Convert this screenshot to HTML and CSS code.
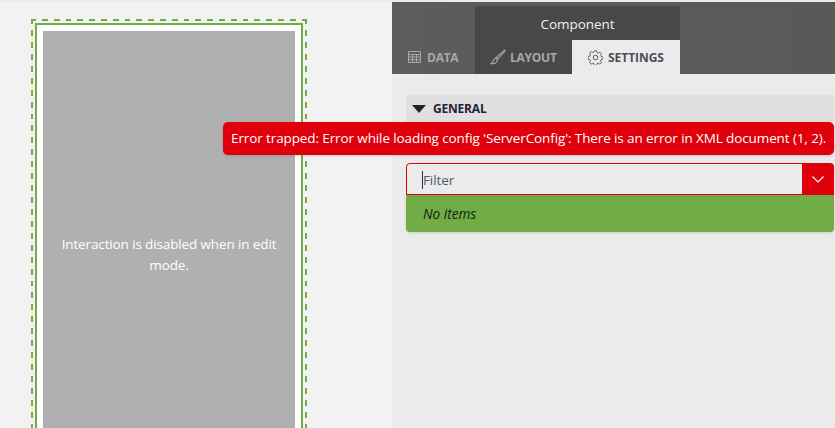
FILE: index.html
```html
<!DOCTYPE html>
<html lang="en">
<head>
<meta charset="utf-8">
<title>Component settings</title>
<link rel="stylesheet" href="styles.css">
</head>
<body>
<div class="page">
  <main class="canvas">
    <div class="dashed">
      <div class="solid">
        <div class="disabled"><p>Interaction is disabled when in edit mode.</p></div>
      </div>
    </div>
  </main>
  <aside class="panel">
    <header class="head">
      <div class="tab tab-data">
        <svg class="ico" viewBox="0 0 13 12" width="13" height="12"><path fill="none" stroke="currentColor" d="M.5.5h12v11H.5zM.5 3.500h12M.5 6h12M.5 8.700h12M4.500 3.500v8M8.500 3.500v8"/></svg>
        <span>DATA</span>
      </div>
      <div class="group">
        <div class="group-title">Component</div>
        <div class="group-tabs">
          <div class="tab tab-layout">
            <svg class="ico" viewBox="0 0 16 16" width="16" height="16"><path fill="none" stroke="currentColor" stroke-width="1.100" d="M14.500 1.200 6 8.600 7.600 10.200 15 2zM5.600 9.200C3.600 9.600 3.800 11.600 2.800 13 2.400 13.700 1.700 14.300 1 14.600c2.600.4 5-.4 6-2.200.5-.9.4-1.700.2-2.200z"/></svg>
            <span>LAYOUT</span>
          </div>
          <div class="tab tab-settings">
            <svg class="ico" viewBox="0 0 16 16" width="15" height="15"><g fill="none" stroke="currentColor"><circle cx="8" cy="8" r="2.400"/><path d="M6.800.8h2.400l.4 2 1.300.6 1.800-1.100 1.700 1.700-1.100 1.800.6 1.300 2 .4v2.400l-2 .4-.6 1.300 1.100 1.800-1.700 1.700-1.800-1.100-1.300.6-.4 2H6.800l-.4-2-1.300-.6-1.800 1.100-1.700-1.700 1.100-1.800-.6-1.300-2-.4V6.800l2-.4.6-1.300-1.100-1.800 1.700-1.700 1.800 1.100 1.300-.6z" stroke-width=".9"/></g></svg>
            <span>SETTINGS</span>
          </div>
        </div>
      </div>
    </header>
    <section class="body">
      <div class="section-head">
        <svg class="caret" viewBox="0 0 14 8" width="14" height="8"><path d="M0 0h14L7 8z"/></svg>
        <span>GENERAL</span>
      </div>
      <div class="combo">
        <div class="filter">
          <span class="text-caret"></span><span class="placeholder">Filter</span>
        </div>
        <div class="toggle">
          <svg viewBox="0 0 12 7" width="12" height="7"><path fill="none" stroke="#fff" stroke-width="1.100" d="M.5.5 6 6 11.500.5"/></svg>
        </div>
      </div>
      <div class="list"><em>No items</em></div>
    </section>
  </aside>
</div>
<div class="toast">Error trapped: Error while loading config 'ServerConfig': There is an error in XML document (1, 2).</div>
</body>
</html>
```

FILE: styles.css
```css
* { box-sizing: border-box; }
html, body {
  margin: 0;
  height: 100%;
  overflow: hidden;
}
body {
  background: #f2f2f2;
  font-family: "Open Sans", "Noto Sans", sans-serif;
  position: relative;
}
.page {
  display: flex;
  height: 100%;
  border-top: 2px solid #ebebeb;
}
.canvas {
  width: 392px;
  flex: none;
  padding: 17px 0 0 31px;
}
.dashed {
  width: 276px;
  height: 600px;
  padding: 4px;
  background-image:
    repeating-linear-gradient(90deg, #70ad47 0 5px, transparent 5px 11px, #70ad47 11px 11.8px),
    repeating-linear-gradient(180deg, #70ad47 0 5px, transparent 5px 11px, #70ad47 11px 11.93px),
    repeating-linear-gradient(180deg, #70ad47 0 5px, transparent 5px 11px, #70ad47 11px 11.93px);
  background-repeat: no-repeat;
  background-size: 100% 2px, 2px 100%, 2px 100%;
  background-position: left top, left top, right top;
}
.solid {
  height: 100%;
  border: 2px solid #70ad47;
  background: #fff;
  padding: 6px;
}
.disabled {
  height: 100%;
  background: #b0b0b0;
  color: #fff;
  font-size: 13.5px;
  letter-spacing: -.13px;
  line-height: 21px;
  text-align: center;
  padding: 203px 12px 0;
}
.disabled p { margin: 0; }
.panel {
  flex: 1;
  background: #ebebeb;
  min-width: 0;
}
.head {
  height: 72px;
  background: linear-gradient(90deg, #5c5c5c, #595959);
  display: flex;
  align-items: flex-end;
}
.tab {
  display: flex;
  align-items: center;
  height: 34px;
  font-size: 12px;
  font-weight: 700;
  letter-spacing: -.25px;
  color: #a8a8a8;
}
.tab-data {
  width: 83px;
  padding-left: 16px;
  gap: 6px;
}
.group {
  width: 205px;
  height: 68px;
  background: #484848;
}
.group-title {
  height: 34px;
  color: #f0f0f0;
  font-size: 13.5px;
  letter-spacing: -.03px;
  text-align: center;
  line-height: 37px;
}
.group-tabs { display: flex; }
.tab-layout {
  width: 97px;
  padding-left: 15px;
  gap: 4px;
}
.tab-settings {
  width: 108px;
  padding-left: 16px;
  gap: 5px;
  background: #ebebeb;
  color: #4a4f57;
  letter-spacing: -.05px;
}
.body { padding: 21px 1px 0 14px; }
.section-head {
  height: 27px;
  background: #e0e0e0;
  display: flex;
  align-items: center;
  gap: 7px;
  padding-left: 6px;
  font-size: 12px;
  font-weight: 700;
  letter-spacing: -.2px;
  color: #1f2430;
}
.caret { fill: #1f2430; }
.combo {
  display: flex;
  height: 32px;
  margin-top: 41px;
  border-radius: 4px 4px 0 0;
  overflow: hidden;
}
.filter {
  flex: 1;
  display: flex;
  align-items: center;
  border: 1px solid #df000b;
  border-right: 0;
  border-radius: 4px 0 0 0;
  padding: 2px 0 0 15px;
  font-size: 13.5px;
  letter-spacing: -.1px;
  color: #4f5b6b;
}
.text-caret {
  width: 1px;
  height: 18px;
  background: #1f2b4a;
}
.toggle {
  width: 32px;
  background: #df000b;
  display: flex;
  align-items: center;
  justify-content: center;
}
.list {
  height: 37px;
  background: #70ad47;
  border-radius: 0 0 4px 4px;
  box-shadow: 0 1px 3px rgba(0,0,0,.12);
  padding-left: 17px;
  font-size: 13.6px;
  line-height: 37px;
  color: #16200f;
}
.toast {
  position: absolute;
  left: 223px;
  top: 122px;
  width: 611px;
  height: 33px;
  background: #df000b;
  border-radius: 5px;
  box-shadow: 0 1px 3px rgba(0,0,0,.15);
  color: #fff;
  font-size: 13.5px;
  letter-spacing: -.11px;
  line-height: 33px;
  padding-left: 8px;
  white-space: nowrap;
}
```
